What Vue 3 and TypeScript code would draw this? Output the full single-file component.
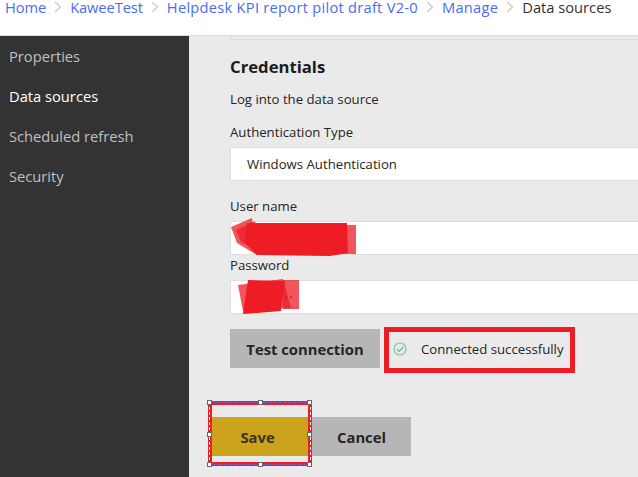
<template>
  <div class="page">
    <nav class="crumbs">
      <template v-for="(c, i) in crumbs" :key="c">
        <a class="crumb" :class="{ wide: i >= 2 }">{{ c }}</a>
        <svg class="sep" width="8" height="14" viewBox="0 0 8 14"><path d="M1 2l5.5 5L1 12" fill="none" stroke="#c8c8c8" stroke-width="1.2" /></svg>
      </template>
      <span class="crumb-current">Data sources</span>
    </nav>

    <div class="body">
      <aside class="side">
        <div v-for="m in menu" :key="m" class="side-item" :class="{ active: m === 'Data sources' }">{{ m }}</div>
      </aside>

      <main class="main">
        <div class="top-box"></div>
        <h2 class="title">Credentials</h2>
        <p class="hint">Log into the data source</p>

        <label class="lbl lbl-auth">Authentication Type</label>
        <div class="field select">Windows Authentication</div>

        <label class="lbl lbl-user">User name</label>
        <div class="field">
          <svg class="scribble user" width="126" height="39" viewBox="0 0 126 39">
            <polygon points="0,9 21,0 26,37 6,25" fill="#ee1c25" fill-opacity=".75" />
            <polygon points="5,12 24,3 28,33 10,24" fill="#ee1c25" fill-opacity=".75" />
            <rect x="109" y="7" width="16" height="29" fill="#ee1c25" fill-opacity=".75" />
            <polygon points="16,5 116,5 117,35 99,38 26,37 14,25" fill="#ee1c25" />
          </svg>
        </div>

        <label class="lbl lbl-pass">Password</label>
        <div class="field">
          <svg class="scribble pass" width="62" height="36" viewBox="0 0 62 36">
            <polygon points="0,6 45,0 53,29 5,32" fill="#ee1c25" fill-opacity=".75" />
            <rect x="45" y="1" width="16" height="29" fill="#ee1c25" fill-opacity=".75" />
            <polygon points="10,1 47,2 43,32 5,35" fill="#ee1c25" />
            <circle cx="48" cy="18" r="1" fill="#9c2b33" />
            <circle cx="53" cy="18" r="1" fill="#9c2b33" />
          </svg>
        </div>

        <div class="test-row">
          <button class="btn btn-test">Test connection</button>
          <div class="status">
            <svg width="16" height="16" viewBox="0 0 16 16">
              <circle cx="8" cy="8" r="6" fill="none" stroke="#8cc4a0" stroke-width="1.2" />
              <path d="M5 8.2l2.2 2.2L11.4 6" fill="none" stroke="#6fb585" stroke-width="1.2" />
            </svg>
            <span>Connected successfully</span>
          </div>
        </div>

        <div class="actions">
          <div class="selected">
            <button class="btn btn-save">Save</button>
            <i v-for="h in handles" :key="h" class="handle" :class="h"></i>
          </div>
          <button class="btn btn-cancel">Cancel</button>
        </div>
      </main>
    </div>
  </div>
</template>

<script setup lang="ts">
const crumbs: string[] = ['Home', 'KaweeTest', 'Helpdesk KPI report pilot draft V2-0', 'Manage']
const menu: string[] = ['Properties', 'Data sources', 'Scheduled refresh', 'Security']
const handles: string[] = ['tl', 'tc', 'tr', 'ml', 'mr', 'bl', 'bc', 'br']
</script>

<style>
html, body { margin: 0; background: #fff; overflow: hidden; }
</style>

<style scoped>
.page {
  width: 638px;
  height: 477px;
  display: flex;
  flex-direction: column;
  overflow: hidden;
  font-family: "Open Sans", "Noto Sans", sans-serif;
  font-size: 13.2px;
  color: #252525;
}
.crumbs {
  height: 35px;
  flex: none;
  display: flex;
  gap: 8px;
  padding-left: 5px;
  align-items: flex-start;
  font-size: 14.7px;
  line-height: 14px;
  border-bottom: 1px solid #dcdcdc;
  white-space: nowrap;
}
.crumb { color: #4a6cf0; letter-spacing: -.1px; }
.crumb.wide { letter-spacing: .25px; }
.crumb-current { color: #333; }
.sep { flex: none; }
.body { flex: 1; display: flex; min-height: 0; }
.side {
  width: 189px;
  flex: none;
  background: #333;
}
.side-item {
  height: 40px;
  line-height: 40px;
  padding-left: 9px;
  font-size: 14.7px;
  color: #c0c0c0;
}
.side-item.active { color: #fff; }
.main {
  flex: 1;
  background: #eaeaea;
  padding-left: 41px;
  min-width: 0;
}
.top-box {
  height: 3px;
  border: 1px solid #dcdcdc;
  border-top: 0;
  border-right: 0;
}
.title {
  margin: 15px 0 0;
  font-size: 16.7px;
  line-height: 24px;
  font-weight: 700;
  color: #1c1c1c;
}
.hint { margin: 11px 0 0; line-height: 18px; }
.lbl { display: block; line-height: 18px; }
.lbl-auth { margin-top: 15px; }
.lbl-user { margin-top: 16px; }
.lbl-pass { margin-top: 1px; }
.field {
  height: 34px;
  margin-top: 6px;
  background: #fff;
  border: 1px solid #dedede;
  border-right: 0;
  box-sizing: border-box;
  line-height: 32px;
  position: relative;
}
.select { padding-left: 16px; }
.scribble { position: absolute; }
.scribble.user { left: 0; top: -4px; }
.scribble.pass { left: 7px; top: -2px; }
.test-row {
  display: flex;
  gap: 4px;
  margin-top: 13px;
  align-items: flex-start;
}
.btn {
  border: 0;
  font-family: inherit;
  font-weight: 700;
  font-size: 14.8px;
  color: #252525;
  background: #b6b6b6;
  padding: 0;
}
.btn-test { width: 150px; height: 39px; margin-top: 2px; }
.status {
  width: 191px;
  height: 46px;
  box-sizing: border-box;
  border: 5px solid #ee1c25;
  display: flex;
  align-items: center;
  padding: 0 0 2px 3px;
  gap: 13px;
  white-space: nowrap;
}
.actions {
  display: flex;
  margin: 28px 0 0 -22px;
  align-items: flex-start;
}
.selected {
  width: 104px;
  height: 65px;
  box-sizing: border-box;
  border: 4px solid #ee1c25;
  position: relative;
  flex: none;
}
.selected::before {
  content: "";
  position: absolute;
  inset: -3px;
  border-style: dashed;
  border-width: 1px;
  border-color: #4a6cf0 #fff;
}
.btn-save {
  display: block;
  width: 96px;
  height: 39px;
  margin-top: 12px;
  padding-right: 5px;
  background: #cba31c;
  color: #3a3320;
}
.btn-cancel { width: 99px; height: 39px; margin-top: 16px; }
.handle {
  position: absolute;
  width: 5px;
  height: 5px;
  box-sizing: border-box;
  background: #fff;
  border: 1px solid #666;
}
.tl, .tc, .tr { top: -5px; }
.bl, .bc, .br { bottom: -5px; }
.ml, .mr { top: 27px; }
.tl, .ml, .bl { left: -5px; }
.tc, .bc { left: 46px; }
.tr, .mr, .br { right: -4px; }
</style>
